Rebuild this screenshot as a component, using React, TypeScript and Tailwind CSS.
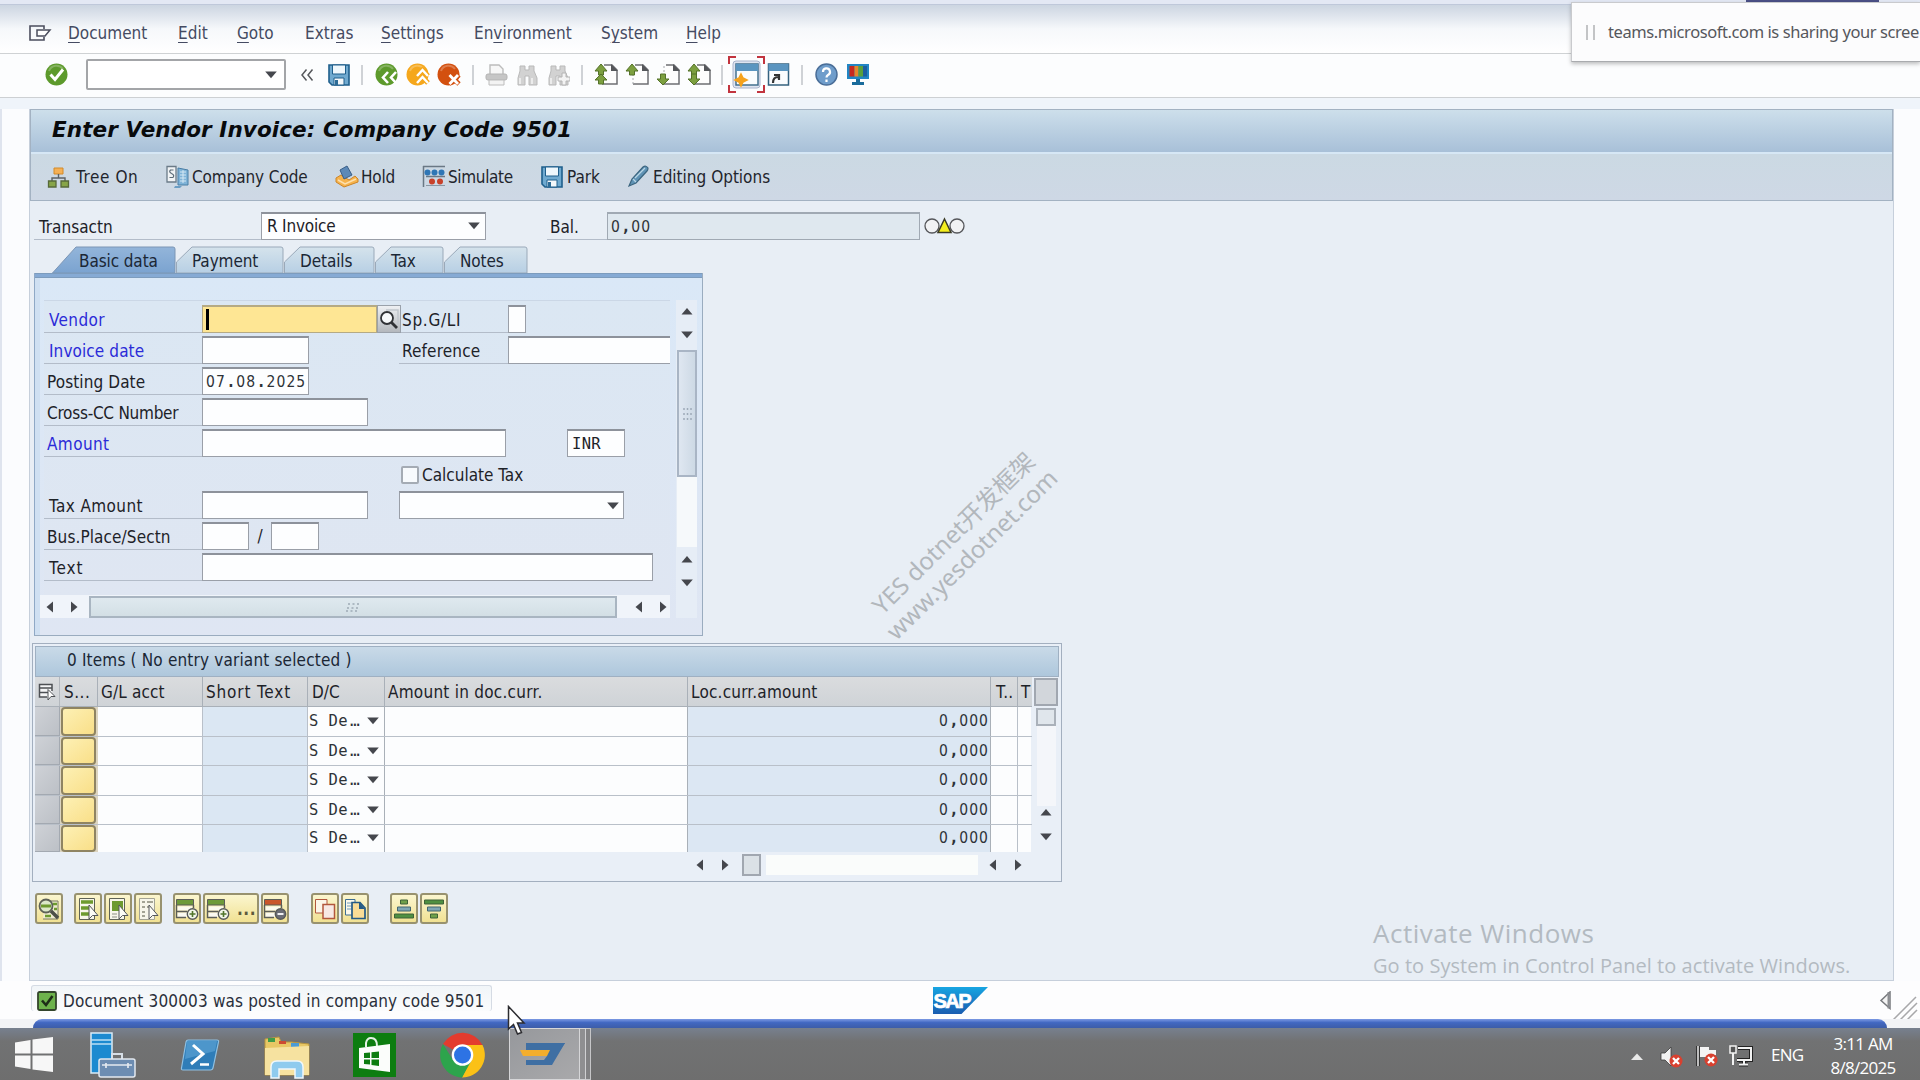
import type { ReactNode } from 'react';

const menuItems = [
  { before: '', key: 'D', after: 'ocument', width: 'w-[110px]' },
  { before: '', key: 'E', after: 'dit', width: 'w-[59px]' },
  { before: '', key: 'G', after: 'oto', width: 'w-[68px]' },
  { before: 'Extr', key: 'a', after: 's', width: 'w-[76px]' },
  { before: '', key: 'S', after: 'ettings', width: 'w-[93px]' },
  { before: 'En', key: 'v', after: 'ironment', width: 'w-[127px]' },
  { before: 'S', key: 'y', after: 'stem', width: 'w-[85px]' },
  { before: '', key: 'H', after: 'elp', width: 'w-[60px]' },
];

const rows = [1, 2, 3, 4, 5];

/* ---------- small building blocks ---------- */

function Svg({ w, h, className = '', children }: { w: number; h: number; className?: string; children: ReactNode }) {
  return (
    <svg width={w} height={h} viewBox={`0 0 ${w} ${h}`} fill="none" className={`block shrink-0 ${className}`}>
      {children}
    </svg>
  );
}

function Arrow({ dir, className = '' }: { dir: 'up' | 'down' | 'left' | 'right'; className?: string }) {
  const d = {
    up: 'M0.5 9.5 L6 3 L11.5 9.5Z',
    down: 'M0.2 2.5 L6 9.3 L11.8 2.5Z',
    left: 'M9 0.5 L2.5 6 L9 11.5Z',
    right: 'M3 0.5 L9.5 6 L3 11.5Z',
  }[dir];
  return (
    <Svg w={12} h={12} className={className}>
      <path d={d} fill="#45474d" />
    </Svg>
  );
}

// Amounts and dates: evenly spaced digits, separators take a whole cell
function Num({ value }: { value: string }) {
  return (
    <span className="text-[15.5px] tracking-[1.05px] text-[#2e3338]">
      {value.split(/([.,])/).map((part, i) =>
        part === '.' || part === ',' ? (
          <span key={i} className="ml-[2.4px] mr-[1.7px] font-bold">{part}</span>
        ) : (
          part
        )
      )}
    </span>
  );
}

function Label({ text, className = '' }: { text: string; className?: string }) {
  return (
    <div className={`flex h-[28px] shrink-0 items-center whitespace-nowrap border-b border-[#b3bcc9] pt-[2px] ${className}`}>
      {text}
    </div>
  );
}

function Field({ className = '', children }: { className?: string; children?: ReactNode }) {
  return (
    <div className={`flex h-[28px] shrink-0 items-center border border-t-2 border-[#9a9fa8] border-t-[#8d929b] bg-[#fdfeff] ${className}`}>
      {children}
    </div>
  );
}

function Separator({ className = '' }: { className?: string }) {
  return <div className={`h-[20px] w-[2px] shrink-0 bg-[#cfd2d6] ${className}`} />;
}

/* ---------- icons ---------- */

function SaveIcon() {
  return (
    <Svg w={22} h={22}>
      <path d="M1 1H21V21H4L1 18Z" fill="#6fa9cf" stroke="#1f5f8c" strokeWidth="1.6" />
      <path d="M4.5 1H17.5V10H4.5Z" fill="#eef7fc" stroke="#1f5f8c" />
      <path d="M6 14H16V21H6Z" fill="#f4f8fa" stroke="#1f5f8c" />
      <path d="M7 16H10V21H7Z" fill="#2d6c97" />
    </Svg>
  );
}

function PageIcon({ up, down, double }: { up?: boolean; down?: boolean; double?: boolean }) {
  return (
    <Svg w={24} h={23}>
      <path d="M10 2H18L23 7V21H8" fill="#fdfdfd" stroke="#6d6f73" strokeWidth="1.5" />
      <path d="M8 3V21" stroke="#a6a8ab" strokeDasharray="2 2" />
      <path d="M17 1V8H24Z" fill="#55575b" />
      {up && <path d="M7 1L13 8H9.5V12H4.5V8H1Z" fill="#7c9f3f" stroke="#55722a" />}
      {double && <path d="M7 11L13 17H9.5V21H4.5V17H1Z" fill="#7c9f3f" stroke="#55722a" />}
      {down && <path d="M7 22L13 16H9.5V11H4.5V16H1Z" fill="#7c9f3f" stroke="#55722a" />}
    </Svg>
  );
}

function Binoculars({ plus }: { plus?: boolean }) {
  return (
    <Svg w={22} h={22}>
      <path d="M3 2H8V6H12V2H17V7L20 14V21H12V12H8V21H1V14L3 7Z" fill="#d2d2d2" stroke="#b9b9b9" />
      <path d="M3 14V20M15 14V20" stroke="#ececec" strokeWidth="2" />
      {plus && <path d="M14 9H18V13H22V17H18V21H14V17H10V13H14Z" fill="#f3f3f3" stroke="#b4b4b4" />}
    </Svg>
  );
}

function BadgeIcon({ fill, children }: { fill: string; children: ReactNode }) {
  return (
    <Svg w={24} h={24}>
      <circle cx="11.5" cy="11.5" r="11" fill={fill} />
      <path d="M4 8a8 8 0 0 1 14-2" stroke="#ffffff" strokeOpacity="0.25" strokeWidth="2" />
      {children}
    </Svg>
  );
}

function ToolButton({ className = 'w-[28px]', children }: { className?: string; children: ReactNode }) {
  return (
    <div
      className={`flex h-[31px] shrink-0 items-center justify-center rounded-[3px] border-2 border-[#98926f] bg-gradient-to-b from-[#fbf6cf] to-[#f1e192] ${className}`}
    >
      {children}
    </div>
  );
}

function ListIcon({ green, pointer }: { green: 'rows' | 'block' | 'none'; pointer?: boolean }) {
  return (
    <Svg w={22} h={24}>
      <path d="M2.5 1.5H17.5V22.5H2.5Z" fill="#f7f6ea" stroke={green === 'none' ? '#a4a495' : '#5e6257'} />
      {green === 'rows' && <path d="M4 5H16M4 11H13M4 17H12" stroke="#6d9a2f" strokeWidth="3.5" />}
      {green === 'block' && <path d="M5 4H16V14H5Z" fill="#6d9a2f" />}
      {green === 'block' && <path d="M5 17H10M5 20H10" stroke="#8d8f85" />}
      {green === 'none' && <path d="M5 5H8M10 5H16M5 10H8M10 10H13M5 15H8M5 19H8" stroke="#a4a495" strokeWidth="2" />}
      {pointer && <path d="M12 8V22L15.5 18.5H21Z" fill="#fbfbf5" stroke="#55575a" />}
    </Svg>
  );
}

function RowIcon({ red }: { red?: boolean }) {
  return (
    <Svg w={24} h={24}>
      <path d="M1.5 2.5H18.5V8H1.5Z" fill={red ? '#c9562c' : '#6d9a3a'} stroke="#5b5d58" />
      <path d="M2.5 9.5H17V13.5H2.5ZM2.5 15.5H12V20H2.5Z" fill="#fbfaf0" />
      <path d="M1.5 8V20.5H11M1.5 14.5H12M18.5 8V11" stroke="#5b5d58" strokeWidth="1.4" />
      <circle cx="17.5" cy="17" r="5.2" fill={red ? '#6a6c75' : '#f4f7ea'} stroke="#575a58" strokeWidth="1.4" />
      {red ? (
        <path d="M14.5 17H20.5" stroke="#fff" strokeWidth="1.8" />
      ) : (
        <path d="M14.5 17H20.5M17.5 14V20" stroke="#52742b" strokeWidth="1.6" />
      )}
    </Svg>
  );
}

/* ---------- top part of the window ---------- */

function MenuBar() {
  return (
    <div className="flex h-[49px] shrink-0 items-center border-b border-[#cfd2d4] bg-gradient-to-b from-[#ccd5e1] via-[#f6f8fb] via-50% to-white pl-[28px] pt-[8px] text-[#454b62]">
      <Svg w={24} h={17} className="mr-[16px]">
        <path d="M16 4V1H2V15H16V12" stroke="#4b4e5e" strokeWidth="1.6" />
        <path d="M9 11V5H22L17 11H9Z" fill="#fff" stroke="#4b4e5e" strokeWidth="1.5" />
      </Svg>
      {menuItems.map((item) => (
        <div key={item.key} className={`shrink-0 ${item.width}`}>
          {item.before}
          <span className="underline decoration-1 underline-offset-[3px]">{item.key}</span>
          {item.after}
        </div>
      ))}
    </div>
  );
}

function StandardToolbar() {
  return (
    <div className="flex h-[44px] shrink-0 items-center border-b border-[#cdd0d3] bg-[#fcfdfe] pb-[2px] pl-[45px]">
      <BadgeIcon fill="#5d9a2c">
        <path d="M5.5 11.5L10 16.5L18 6.5" stroke="#fff" strokeWidth="3" />
      </BadgeIcon>
      <div className="ml-[17px] flex h-[31px] w-[200px] items-center justify-end rounded-[2px] border-2 border-[#a3a5a8] bg-white pr-[7px]">
        <Arrow dir="down" />
      </div>
      <Svg w={14} h={14} className="ml-[14px] mr-[14px]">
        <path d="M6.5 1.5L2 7L6.5 12.5M12.5 1.5L8 7L12.5 12.5" stroke="#55575b" strokeWidth="1.5" />
      </Svg>
      <SaveIcon />
      <Separator className="ml-[11px] mr-[12px]" />
      <BadgeIcon fill="#5d9a2c">
        <path d="M13 9L8 14.5L13 20M21 9L16 14.5L21 20" stroke="#fff" strokeWidth="2.6" />
      </BadgeIcon>
      <div className="ml-[7px]">
        <BadgeIcon fill="#f5a71c">
          <path d="M11 13L16.5 7L22 13M11 20L16.5 14L22 20" stroke="#f5a71c" strokeWidth="5" />
          <path d="M11 13L16.5 7L22 13M11 20L16.5 14L22 20" stroke="#fff" strokeWidth="2.4" />
        </BadgeIcon>
      </div>
      <div className="ml-[7px]">
        <BadgeIcon fill="#d3500f">
          <path d="M12 12L22 21M22 12L12 21" stroke="#d3500f" strokeWidth="5" />
          <path d="M12.500 12L21 21M21 12L12.500 21" stroke="#fff" strokeWidth="2.8" />
        </BadgeIcon>
      </div>
      <Separator className="ml-[11px] mr-[11px]" />
      <Svg w={23} h={23}>
        <path d="M5 11V2H14L18 6V11" fill="#f7f7f7" stroke="#bcbcbc" strokeWidth="1.4" />
        <rect x="1" y="11" width="21" height="6" rx="2" fill="#c6c6c6" stroke="#b4b4b4" />
        <path d="M4 17H19V22H4Z" fill="#f3f3f3" stroke="#bcbcbc" />
      </Svg>
      <div className="ml-[9px]"><Binoculars /></div>
      <div className="ml-[9px]"><Binoculars plus /></div>
      <Separator className="ml-[11px] mr-[11px]" />
      <PageIcon up double />
      <div className="ml-[7px]"><PageIcon up /></div>
      <div className="ml-[7px]"><PageIcon down /></div>
      <div className="ml-[7px]"><PageIcon up down /></div>
      <Separator className="ml-[10px] mr-[5px]" />
      <Svg w={37} h={37}>
        <path d="M1 8V1H8M29 1H36V8M36 29V36H29M8 36H1V29" stroke="#c2343e" strokeWidth="2" />
        <rect x="5" y="5" width="27" height="27" rx="3" fill="#dfe4f0" stroke="#aab4cc" />
        <path d="M8 8H30V29H8Z" fill="#fafcfe" stroke="#44708f" strokeWidth="1.5" />
        <path d="M8 8H30V15H8Z" fill="#5b95c0" />
        <path d="M13 18L15 22L19 24L15 26L13 30L11 26L7 24L11 22Z" fill="#f6a21d" stroke="#f6a21d" strokeWidth="1.6" />
      </Svg>
      <Svg w={23} h={23} className="ml-[2px]">
        <path d="M1.500 1H21.500V22H1.500Z" fill="#fafcfe" stroke="#34627f" strokeWidth="1.5" />
        <path d="M1.500 1H21.500V8H1.500Z" fill="#5b95c0" />
        <path d="M6 20C6 16 8 14 11 14M7 12H12V17" stroke="#333" strokeWidth="2.2" />
      </Svg>
      <Separator className="ml-[11px] mr-[12px]" />
      <Svg w={23} h={23}>
        <circle cx="11.500" cy="11.500" r="10.500" fill="#6f9dcb" stroke="#4a6e98" strokeWidth="1.5" />
        <path d="M8 9a3.500 3.500 0 1 1 5 3q-1.500 1-1.500 2.500M11.500 16.500V19" stroke="#fff" strokeWidth="2.2" />
      </Svg>
      <Svg w={24} h={23} className="ml-[8px]">
        <path d="M1 1H23V16H1Z" fill="#2186c4" />
        <path d="M3.500 3H8.500V13.500H3.500Z" fill="#c8281e" />
        <path d="M8.500 3H12.500V13.500H8.500Z" fill="#e8872a" />
        <path d="M12.500 3H17V13.500H12.500Z" fill="#58a03c" />
        <path d="M17 3H21V13.500H17Z" fill="#1d5fa0" />
        <path d="M10 16H14V19H18V22H6V19H10Z" fill="#1a6c9c" />
      </Svg>
    </div>
  );
}

function TitlePanel() {
  return (
    <div className="h-[92px] border border-[#a3b2c2]">
      <div className="flex h-[44px] items-center border-b-2 border-[#d6e7f5] bg-gradient-to-b from-[#cddfeb] to-[#a8c0d8] pb-[3px] pl-[21px]">
        <h1 className="whitespace-nowrap font-['DejaVu_Sans',sans-serif] text-[21.5px] font-bold italic tracking-[0.09px] text-[#080a0c]">
          Enter Vendor Invoice: Company Code 9501
        </h1>
      </div>
      <div className="flex h-[46px] items-center bg-gradient-to-b from-[#cbd9e3] to-[#ced8e5] pb-px pl-[16px] text-[#1f252c]">
        <div className="flex w-[119px] shrink-0 items-center whitespace-nowrap tracking-[0.6px]">
          <Svg w={23} h={22} className="mr-[6px]">
            <path d="M7 2H16V8H7Z" fill="#f5b055" stroke="#d28a2a" />
            <path d="M11.500 8V12M5 15V12H18V15" stroke="#5d6266" strokeWidth="1.4" />
            <path d="M1.500 15H9V21H1.500ZM14 15H21.500V21H14Z" fill="#87a548" stroke="#57693a" strokeWidth="1.3" />
          </Svg>
          Tree On
        </div>
        <div className="flex w-[169px] shrink-0 items-center whitespace-nowrap tracking-[-0.1px]">
          <Svg w={24} h={24} className="mr-[2px]">
            <path d="M1 1.500H10V17H1Z" fill="#f0f3f5" stroke="#6b7b88" strokeWidth="1.300" />
            <path d="M7.500 5H4.500Q2.500 7 5.500 8.500Q9 10 7 12.500H3.500" stroke="#5b6a76" strokeWidth="1.200" />
            <path d="M12 3L22 5V20H12Z" fill="#7fb3d8" stroke="#4a7ea5" />
            <path d="M14 7H20M14 10H20M14 13H20M14 16H20M17 5V18" stroke="#d5e8f4" />
            <path d="M9 21H16L14 23H8Z" fill="#6b9dc4" />
          </Svg>
          Company Code
        </div>
        <div className="flex w-[87px] shrink-0 items-center whitespace-nowrap tracking-[-0.2px]">
          <Svg w={24} h={23} className="mr-[2px]">
            <path d="M1 13L6 10L14 15L20 11L23 14V17L9 22L1 17Z" fill="#f6b34c" stroke="#cc8529" />
            <path d="M3 15L10 19L21 14" stroke="#fde0ae" strokeWidth="1.500" />
            <path d="M5 5L12 1L17 10L9 14Z" fill="#5c89b8" stroke="#3a5f88" />
          </Svg>
          Hold
        </div>
        <div className="flex w-[119px] shrink-0 items-center whitespace-nowrap tracking-[-0.35px]">
          <Svg w={24} h={23} className="mr-[2px]">
            <path d="M1 1.500H23M1.500 1V22M4 11.500H23" stroke="#6a7885" strokeWidth="1.500" />
            <circle cx="5.500" cy="7.500" r="3" fill="#2f76b5" />
            <circle cx="12.500" cy="7.500" r="3" fill="#2f76b5" />
            <circle cx="19.500" cy="7.500" r="3" fill="#2f76b5" />
            <circle cx="10" cy="16.500" r="3" fill="#c8412a" />
            <circle cx="18" cy="16.500" r="3" fill="#c8412a" />
            <path d="M4 20.500H23" stroke="#8a97a3" />
          </Svg>
          Simulate
        </div>
        <div className="flex w-[87px] shrink-0 items-center whitespace-nowrap">
          <div className="mr-[4px]"><SaveIcon /></div>
          Park
        </div>
        <div className="flex shrink-0 items-center whitespace-nowrap">
          <Svg w={24} h={23} className="mr-[1px]">
            <path d="M1 21L4 14L15 2Q18 0 20 3Q20 5 19 6L8 18Z" fill="#5f93b5" stroke="#3b657f" strokeWidth="1.200" />
            <path d="M5 14L8 17M7 13L17 3" stroke="#b9d6e6" strokeWidth="1.300" />
          </Svg>
          Editing Options
        </div>
      </div>
    </div>
  );
}

/* ---------- header data ---------- */

function TransactionRow() {
  return (
    <div className="mt-[11px] flex h-[29px] items-start pl-[4px]">
      <Label text="Transactn" className="w-[227px] pl-[5px] text-[#1d2228]" />
      <Field className="w-[225px] justify-between pb-px pl-[5px] pr-[5px] tracking-[-0.2px] text-[#1d2228]">
        <span>R Invoice</span>
        <Arrow dir="down" />
      </Field>
      <Label text="Bal." className="ml-[61px] w-[60px] pl-[3px] text-[#1d2228]" />
      <div className="flex h-[28px] w-[313px] shrink-0 items-center border border-t-2 border-[#a0a9b3] bg-[#dfe8ef] pl-[3px]">
        <Num value="0,00" />
      </div>
      <Svg w={42} h={18} className="ml-[4px] mt-[5px]">
        <circle cx="8" cy="9" r="7" fill="#f1f2f4" stroke="#55565a" strokeWidth="1.300" />
        <circle cx="33" cy="9" r="7" fill="#f1f2f4" stroke="#55565a" strokeWidth="1.300" />
        <path d="M20.500 2L27 15.500H14Z" fill="#f4ee1e" stroke="#3a3a24" strokeWidth="1.500" />
      </Svg>
    </div>
  );
}

function Tab({ text, width, active }: { text: string; width: number; active?: boolean }) {
  const slope = active ? 24 : 16;
  const gradientId = active ? 'tab-active' : 'tab-plain';
  return (
    <div className="relative flex h-[27px] shrink-0 items-center pt-[2px]" style={{ width }}>
      <svg width={width} height={27} className="absolute left-0 top-0 block">
        <defs>
          <linearGradient id={gradientId} x1="0" y1="0" x2="0" y2="1">
            <stop offset="0" stopColor={active ? '#93b5da' : '#d5e3ec'} />
            <stop offset="1" stopColor={active ? '#7ba3d0' : '#b7cfe4'} />
          </linearGradient>
        </defs>
        <path
          d={`M0.500 ${active ? 27 : 16} L${slope} 1 H${width - 3} Q${width - 1} 1 ${width - 1} 3 V27 H0.500Z`}
          fill={`url(#${gradientId})`}
          stroke={active ? '#7c96b5' : '#9aa9b9'}
        />
      </svg>
      <span className={`relative whitespace-nowrap tracking-[-0.1px] text-[#1b2735] ${active ? 'pl-[27px]' : 'pl-[16px]'}`}>{text}</span>
    </div>
  );
}

function BasicData() {
  return (
    <div className="h-[295px] w-[626px] overflow-hidden border-t border-[#cbd7e6] bg-gradient-to-b from-[#dbe7f3] to-[#dfe6f2] pt-[4px] text-[#1d2228]">
      <div className="flex flex-col gap-[3px]">
        <div className="flex">
          <Label text="Vendor" className="w-[158px] pl-[5px] tracking-[0.4px] text-[#2b2bd8]" />
          <div className="flex h-[28px] w-[175px] shrink-0 items-center border border-t-2 border-[#b5aa84] bg-[#fee694] pl-[3px]">
            <div className="h-[21px] w-[3px] bg-black" />
          </div>
          <div className="flex h-[28px] w-[24px] shrink-0 items-center justify-center border border-[#9aa1aa] bg-gradient-to-b from-[#eef0f3] to-[#b4b8bd]">
            <Svg w={22} h={22}>
              <path d="M8 2H20V17" stroke="#c1c6cd" strokeWidth="1.500" />
              <circle cx="9" cy="10" r="6" fill="#f6f8fa" stroke="#303236" strokeWidth="1.800" />
              <path d="M13.500 14.500L19 20" stroke="#303236" strokeWidth="2.800" />
            </Svg>
          </div>
          <Label text="Sp.G/LI" className="w-[107px] pl-px tracking-[0.7px]" />
          <Field className="w-[18px]" />
        </div>
        <div className="flex">
          <Label text="Invoice date" className="w-[158px] pl-[5px] tracking-[0.1px] text-[#2b2bd8]" />
          <Field className="w-[107px]" />
          <Label text="Reference" className="ml-[90px] w-[109px] pl-[3px] tracking-[0.15px]" />
          <Field className="w-[180px]" />
        </div>
        <div className="flex">
          <Label text="Posting Date" className="w-[158px] pl-[3px] tracking-[0.1px]" />
          <Field className="w-[107px] pl-[3px]"><Num value="07.08.2025" /></Field>
        </div>
        <div className="flex">
          <Label text="Cross-CC Number" className="w-[158px] pl-[3px] tracking-[-0.25px]" />
          <Field className="w-[166px]" />
        </div>
        <div className="flex">
          <Label text="Amount" className="w-[158px] pl-[3px] tracking-[0.4px] text-[#2b2bd8]" />
          <Field className="w-[304px]" />
          <Field className="ml-[61px] w-[58px] pl-[4px] font-['DejaVu_Sans_Mono',monospace] text-[15.5px] tracking-[0.300px]">INR</Field>
        </div>
        <div className="flex h-[28px] items-center pl-[357px] pt-[2px]">
          <div className="mr-[3px] h-[18px] w-[18px] rounded-[2px] border-2 border-[#a4abb4] bg-[#f7fafd]" />
          Calculate Tax
        </div>
        <div className="flex">
          <Label text="Tax Amount" className="w-[158px] pl-[5px] tracking-[0.4px]" />
          <Field className="w-[166px]" />
          <Field className="ml-[31px] w-[225px] justify-end pr-[4px]"><Arrow dir="down" /></Field>
        </div>
        <div className="flex">
          <Label text="Bus.Place/Sectn" className="w-[158px] pl-[3px] tracking-[0.1px]" />
          <Field className="w-[47px]" />
          <div className="flex h-[28px] w-[22px] items-center justify-center">/</div>
          <Field className="w-[48px]" />
        </div>
        <div className="flex">
          <Label text="Text" className="w-[158px] pl-[5px] tracking-[1px]" />
          <Field className="w-[451px]" />
        </div>
      </div>
    </div>
  );
}

function TabPanel() {
  return (
    <div className="h-[363px] w-[669px] border border-t-0 border-[#9aacbf] border-l-[#8fa9c6] bg-[#dde7f4]">
      <div className="h-[5px] border-b border-t border-[#7d9cbd] bg-[#86aad4]" />
      <div className="flex h-[357px] border-l-[5px] border-[#cfe0f2] bg-gradient-to-b from-[#dae8f7] to-[#dfe6f3] pl-[4px] pt-[22px]">
        <div className="w-[626px] shrink-0">
          <BasicData />
          {/* horizontal scrollbar */}
          <div className="-ml-[4px] flex h-[23px] w-[630px] items-center bg-[#f0f4fa]">
            <Arrow dir="left" className="ml-[4px]" />
            <Arrow dir="right" className="ml-[12px]" />
            <div className="ml-[9px] flex h-[22px] w-[528px] items-center justify-center border-2 border-[#a9b5c1] bg-gradient-to-b from-[#dfe9ef] to-[#d3dfe5]">
              <Svg w={14} h={10}>
                <path d="M2 2H13M1 6H12M0 9H11" stroke="#9eabb5" strokeWidth="1.500" strokeDasharray="2 2.500" />
              </Svg>
            </div>
            <Arrow dir="left" className="ml-[16px]" />
            <Arrow dir="right" className="ml-[12px]" />
          </div>
        </div>
        {/* vertical scrollbar */}
        <div className="ml-[6px] flex h-[318px] w-[21px] flex-col items-center bg-[#e6edf6]">
          <Arrow dir="up" className="mt-[5px]" />
          <Arrow dir="down" className="mt-[12px]" />
          <div className="mt-[9px] flex h-[127px] w-[20px] items-center justify-center border-2 border-[#a9b5c5] bg-gradient-to-r from-[#dfe7f1] to-[#cdd9e5]">
            <Svg w={10} h={14}>
              <path d="M2 1V14M5.500 1V14M9 1V14" stroke="#9eabb9" strokeWidth="1.500" strokeDasharray="2 3" />
            </Svg>
          </div>
          <div className="h-[70px] w-[20px] bg-[#f6f9fb]" />
          <Arrow dir="up" className="mt-[6px]" />
          <Arrow dir="down" className="mt-[12px]" />
        </div>
      </div>
    </div>
  );
}

/* ---------- item table ---------- */

function ItemTable() {
  return (
    <div className="h-[239px] w-[1030px] border border-[#a3afbf] bg-[#e9eff7] p-[2px]">
      <div className="flex h-[31px] items-center border border-[#9fb0c2] bg-gradient-to-b from-[#c9dae8] to-[#aec7dc] pb-[3px] pl-[31px] tracking-[0.17px] text-[#1b2735]">
        <span className="whitespace-pre">0 Items ( No entry variant selected )</span>
      </div>
      <div className="flex">
        <div className="w-[997px] shrink-0">
          <div className="flex h-[30px] items-center border-b border-[#a9b0b8] bg-gradient-to-b from-[#dadcde] to-[#cfd3d7] text-[#1d2228]">
            <div className="flex h-full w-[25px] shrink-0 items-center justify-center border-r border-[#b3b8be]">
              <Svg w={18} h={18}>
                <path d="M1.500 1.500H14V14H1.500Z" fill="#f4f5f6" />
                <path d="M14 8V1.500H1.500V14H9M1.500 5H14M1.500 9.500H10" stroke="#4d5054" strokeWidth="1.500" />
                <path d="M10 6.500V17L13 13.500H17Z" fill="#fff" stroke="#4d5054" />
              </Svg>
            </div>
            <div className="flex h-full w-[38px] shrink-0 items-center overflow-hidden border-r border-[#a9b0b8] pl-[4px] tracking-[0.500px]">S...</div>
            <div className="flex h-full w-[105px] shrink-0 items-center border-r border-[#a9b0b8] pl-[3px] tracking-[0.15px]">G/L acct</div>
            <div className="flex h-full w-[105px] shrink-0 items-center border-r border-[#a9b0b8] pl-[3px] tracking-[0.85px]">Short Text</div>
            <div className="flex h-full w-[77px] shrink-0 items-center border-r border-[#a9b0b8] pl-[4px]">D/C</div>
            <div className="flex h-full w-[303px] shrink-0 items-center border-r border-[#a9b0b8] pl-[3px] tracking-[0.25px]">Amount in doc.curr.</div>
            <div className="flex h-full w-[303px] shrink-0 items-center border-r border-[#a9b0b8] pl-[3px] tracking-[0.2px]">Loc.curr.amount</div>
            <div className="flex h-full w-[27px] shrink-0 items-center overflow-hidden border-r border-[#a9b0b8] pl-[5px]">T..</div>
            <div className="flex h-full w-[14px] shrink-0 items-center pl-[3px]">T</div>
          </div>
          {rows.map((row) => (
            <div key={row} className={`flex border-[#b9c0c9] ${row === rows.length ? 'h-[26.6px]' : 'h-[29.5px] border-b'}`}>
              <div className="w-[25px] shrink-0 border-b border-r border-[#a3a9b1] bg-gradient-to-br from-[#cfd2d7] to-[#bcc0c6]" />
              <div className="w-[38px] shrink-0 bg-[#ddd5c0] pl-px pr-[2px]">
                <div className="h-full rounded-[4px] border-2 border-[#8f8462] bg-gradient-to-br from-[#fdf0b4] to-[#f9df88]" />
              </div>
              <div className="w-[105px] shrink-0 border-r border-[#b9c0c9] bg-[#fcfdfe]" />
              <div className="w-[105px] shrink-0 border-r border-[#b9c0c9] bg-[#dbe7f3]" />
              <div className="flex w-[77px] shrink-0 items-center border-r border-[#a9b0b8] bg-[#fcfdfe] pl-px font-['DejaVu_Sans_Mono',monospace] text-[15.5px] text-[#2e3338]">
                <span className="whitespace-pre tracking-[0.400px]">S De</span>
                <span className="-ml-px w-[11px] tracking-[-6px]">...</span>
                <Arrow dir="down" className="ml-[9px]" />
              </div>
              <div className="w-[303px] shrink-0 border-r border-[#a9b0b8] bg-[#fcfdfe]" />
              <div className="flex w-[303px] shrink-0 items-center justify-end border-r border-[#a9b0b8] bg-[#dce7f3] pr-[1px]">
                <Num value="0,000" />
              </div>
              <div className="w-[27px] shrink-0 border-r border-[#b9c0c9] bg-[#fcfdfe]" />
              <div className="w-[13px] shrink-0 bg-[#fcfdfe]" />
            </div>
          ))}
          <div className="flex h-[27px] items-center pl-[659px]">
            <Arrow dir="left" />
            <Arrow dir="right" className="ml-[13px]" />
            <div className="ml-[11px] h-[22px] w-[19px] shrink-0 border-2 border-[#a1a7b0] bg-[#dbe1e6]" />
            <div className="ml-[5px] h-[20px] w-[212px] shrink-0 bg-[#fafcfb]" />
            <Arrow dir="left" className="ml-[9px]" />
            <Arrow dir="right" className="ml-[13px]" />
          </div>
        </div>
        <div className="ml-[2px] flex w-[24px] flex-col items-center">
          <div className="mt-px h-[28px] w-[24px] border-2 border-[#a1a7b0] bg-[#d2d6db]" />
          <div className="mt-[2px] h-[18px] w-[20px] border-2 border-[#aab1ba] bg-[#e0e6ec]" />
          <div className="h-[80px] w-[19px] bg-[#f4f6fa]" />
          <Arrow dir="up" />
          <Arrow dir="down" className="mt-[13px]" />
        </div>
      </div>
    </div>
  );
}

function ItemToolbar() {
  return (
    <div className="mt-[11px] flex h-[31px] pl-[5px]">
      <ToolButton>
        <Svg w={24} h={24}>
          <path d="M8 4H21V22H6" fill="#efecd0" stroke="#77795f" />
          <path d="M16 7H20M17 12H20M8 19H14" stroke="#6d9a2f" strokeWidth="2.500" />
          <circle cx="9" cy="9" r="6.500" fill="#dbe8c9" stroke="#5e6257" strokeWidth="1.800" />
          <path d="M4 9H14" stroke="#6d9a2f" strokeWidth="3" />
          <path d="M14 14L21 21" stroke="#4c4f48" strokeWidth="3.500" />
        </Svg>
      </ToolButton>
      <div className="ml-[11px] flex gap-[2px]">
        <ToolButton><ListIcon green="rows" pointer /></ToolButton>
        <ToolButton><ListIcon green="block" pointer /></ToolButton>
        <ToolButton><ListIcon green="none" pointer /></ToolButton>
      </div>
      <div className="ml-[11px] flex gap-[2px]">
        <ToolButton><RowIcon /></ToolButton>
        <ToolButton className="w-[56px]">
          <RowIcon />
          <span className="ml-[7px] font-bold tracking-[0.500px] text-[#5d5a3c]">...</span>
        </ToolButton>
        <ToolButton><RowIcon red /></ToolButton>
      </div>
      <div className="ml-[22px] flex gap-[2px]">
        <ToolButton>
          <Svg w={24} h={24}>
            <path d="M2.500 2.500H14V16H2.500Z" fill="#fbf6e8" stroke="#b2573c" />
            <path d="M10 7.500H21.500V21.500H10Z" fill="#f7e9e4" stroke="#b2573c" strokeWidth="1.500" />
          </Svg>
        </ToolButton>
        <ToolButton>
          <Svg w={24} h={24}>
            <path d="M2.500 2.500H12V18H2.500Z" fill="#fbf9ec" stroke="#3c6d92" />
            <path d="M4 6H8M4 9H8M4 12H8" stroke="#6f9cbc" />
            <path d="M9 5.500H17L22 11V21.500H9Z" fill="#fadc96" stroke="#245a86" strokeWidth="1.700" />
            <path d="M16 5V12H22Z" fill="#245a86" />
          </Svg>
        </ToolButton>
      </div>
      <div className="ml-[21px] flex gap-[2px]">
        <ToolButton>
          <Svg w={22} h={24}>
            <path d="M7.500 3H14.500V7H7.500Z" fill="#6fa04a" stroke="#3e6238" />
            <path d="M4.500 10H17.500V14H4.500Z" fill="#7ea6b4" stroke="#426673" />
            <path d="M1.500 17H20.500V21H1.500Z" fill="#4f9041" stroke="#3e6238" />
          </Svg>
        </ToolButton>
        <ToolButton>
          <Svg w={22} h={24}>
            <path d="M1.500 3H20.500V7H1.500Z" fill="#4f9041" stroke="#3e6238" />
            <path d="M4.500 10H17.500V14H4.500Z" fill="#7ea6b4" stroke="#426673" />
            <path d="M7.500 17H14.500V21H7.500Z" fill="#6fa04a" stroke="#3e6238" />
          </Svg>
        </ToolButton>
      </div>
    </div>
  );
}

/* ---------- bottom of the screen ---------- */

function StatusBar() {
  return (
    <div className="flex h-[38px] items-start bg-[#fdfdfe] pt-[4px]">
      <div className="ml-[31px] flex h-[26px] w-[461px] shrink-0 items-center rounded-[3px] border border-b-0 border-[#d5dbe4] bg-gradient-to-b from-[#f1f5f8] to-[#fbfcfd] pl-[5px] pt-[4px] tracking-[0.16px] text-[#2a2f3a]">
        <Svg w={20} h={20} className="mr-[6px]">
          <rect x="1" y="1" width="18" height="18" rx="1.500" fill="#6db24c" stroke="#33452c" strokeWidth="1.800" />
          <path d="M5 9.500L9 14L15.500 5" stroke="#1d2d18" strokeWidth="2.600" />
        </Svg>
        <span className="whitespace-nowrap">Document 300003 was posted in company code 9501</span>
      </div>
      <Svg w={56} h={28} className="ml-[441px] mt-[2px]">
        <defs>
          <linearGradient id="sap" x1="0" y1="0" x2="0" y2="1">
            <stop offset="0" stopColor="#17a5e2" />
            <stop offset="1" stopColor="#1a5cb0" />
          </linearGradient>
        </defs>
        <path d="M0 0H55L28.500 27H0Z" fill="url(#sap)" />
        <text x="0.500" y="20.500" fill="#fff" stroke="#fff" strokeWidth="0.700" fontFamily="Liberation Sans, sans-serif" fontSize="20" fontWeight="700" textLength="38">SAP</text>
      </Svg>
      <Svg w={13} h={19} className="ml-[890px] mt-[6px]">
        <path d="M11 1V17.500L2 9.500Z" fill="#f4f4f4" stroke="#77797d" strokeWidth="1.500" />
        <path d="M9.500 1V17.500" stroke="#8b8d91" strokeWidth="2" />
      </Svg>
      <Svg w={27} h={26} className="mt-[10px]">
        <path d="M1 25L24 2M8 25L25 8M15 25L25 15" stroke="#a8a8aa" strokeWidth="1.500" />
      </Svg>
    </div>
  );
}

function Taskbar() {
  return (
    <div className="flex h-[52px] bg-gradient-to-b from-[#77808f] via-[#717273] via-25% to-[#6e6e6e] text-white">
      <Svg w={40} h={36} className="ml-[15px] mt-[9px]">
        <path d="M0 5.500L15.500 3V16.500H0ZM17.500 2.500L38 0V16.500H17.500ZM0 18.500H15.500V32L0 29.500ZM17.500 18.500H38V35L17.500 32.500Z" fill="#f7f7f7" />
      </Svg>
      <Svg w={48} h={47} className="ml-[34px] mt-[4px]">
        <path d="M2 1H23V41H2Z" fill="#1c8ad0" stroke="#d9ecf7" strokeWidth="1.500" />
        <path d="M2 8H23M2 12H23" stroke="#b9def3" strokeWidth="1.500" />
        <path d="M23 27V22H33V27" stroke="#d7dee6" strokeWidth="2" />
        <rect x="10" y="27" width="36" height="18" rx="2" fill="#6d8db2" stroke="#e3e9f0" strokeWidth="1.500" />
        <path d="M13 33H43M17 31V36M39 31V36" stroke="#e3e9f0" strokeWidth="1.700" />
      </Svg>
      <Svg w={40} h={33} className="ml-[43px] mt-[11px]">
        <path d="M8 1H37Q39 1 38.500 3L33 29Q32.500 31 30.500 31H3Q1 31 1.500 29L6 3Q6.500 1 8 1Z" fill="#2f7db8" stroke="#8fc0e2" strokeWidth="1.200" />
        <path d="M7 2H37L35 12L5 20Z" fill="#6bb0de" fillOpacity="0.500" />
        <path d="M13 6L23 15L11 25" stroke="#fff" strokeWidth="3" />
        <path d="M20 25.500H29" stroke="#fff" strokeWidth="2.500" />
      </Svg>
      <Svg w={48} h={44} className="ml-[43px] mt-[7px]">
        <path d="M2 4L16 2L18 7H28L46 9V40H2Z" fill="#e8c765" stroke="#b8953f" />
        <path d="M5 3H12V7H5Z" fill="#3f9b48" />
        <path d="M16 6H23V9H16Z" fill="#cc4a32" />
        <path d="M28 8H36V12H28Z" fill="#4b9cd6" />
        <path d="M2 13L46 11V40H2Z" fill="#f6e2a0" />
        <path d="M8 43V32Q8 26 14 26H34Q40 26 40 32V43H32V34H16V43Z" fill="#8fcbee" stroke="#f0f8fc" strokeWidth="1.500" />
      </Svg>
      <Svg w={43} h={45} className="ml-[42px] mt-[5px]">
        <path d="M0 0H43V44H0Z" fill="#0d7d10" />
        <path d="M6 15L37 11V39L6 35Z" fill="#fbfdfb" />
        <path d="M13 14V10Q14 5 18 5Q24 5 24 13" stroke="#e5f3e5" strokeWidth="2" />
        <path d="M11 20L17 19.500V25H11ZM18.500 19.300L26 18.500V25H18.500ZM11 26.500H17V31.500L11 31ZM18.500 26.500H26V33L18.500 32Z" fill="#0d7d10" />
      </Svg>
      <Svg w={48} h={46} className="ml-[43px] mt-[4px]">
        <path d="M23.500 23L4 12A22.500 22.500 0 0 1 43.500 13H23.500Z" fill="#e33b2e" />
        <path d="M23.500 23H34L23 45.500A22.500 22.500 0 0 0 43.500 13H23.500Z" fill="#fbc116" />
        <path d="M4 12A22.500 22.500 0 0 0 23 45.500L32.500 28.500L14 28Z" fill="#2da44c" />
        <circle cx="23.500" cy="23" r="10.800" fill="#fff" />
        <circle cx="23.500" cy="23" r="8.500" fill="#2d73e4" />
      </Svg>
      {/* active task with stacked windows */}
      <div className="ml-[22px] flex h-full w-[71px] items-center justify-center border border-[#d6d6d8] bg-gradient-to-br from-[#96989c] to-[#a9a9ab] pr-[4px]">
        <Svg w={46} h={26}>
          <path d="M6 2H45L32 24H6V19H24L27 15H6V7H6Z" fill="#3f6fa3" />
          <path d="M6 2H45L40 9H6Z" fill="#3f6fa3" />
          <path d="M0 9H30L27 15H3Z" fill="#f4ae2d" />
        </Svg>
      </div>
      <div className="w-[6px] border border-l-0 border-[#d0d0d2] bg-[#8f8f91]" />
      <div className="w-[5px] border border-l-0 border-[#c6c6c8] bg-[#828284]" />

      <Svg w={14} h={9} className="ml-auto mt-[24px]">
        <path d="M1 8L7 1.500L13 8Z" fill="#e9e9e9" />
      </Svg>
      <Svg w={26} h={24} className="ml-[16px] mt-[18px]">
        <path d="M1 7H5L11 1V20L5 14H1Z" fill="#f2f2f2" stroke="#3d3d3d" strokeWidth="0.800" />
        <circle cx="16" cy="15" r="6.500" fill="#d8402f" />
        <path d="M13 12L19 18M19 12L13 18" stroke="#fff" strokeWidth="2.300" />
      </Svg>
      <Svg w={24} h={24} className="ml-[10px] mt-[17px]">
        <path d="M2 1V21" stroke="#1f1f1f" strokeWidth="3.500" />
        <path d="M2 1V21" stroke="#f4f4f4" strokeWidth="1.500" />
        <path d="M4 2H13V5H20V10L13 12H4Z" fill="#f4f4f4" />
        <circle cx="15" cy="15" r="6.500" fill="#d8402f" />
        <path d="M12 12L18 18M18 12L12 18" stroke="#fff" strokeWidth="2.300" />
      </Svg>
      <Svg w={24} h={22} className="ml-[9px] mt-[17px]">
        <path d="M9 3H22V15H8M15 15V19M10 19.500H19" stroke="#222" strokeWidth="4" />
        <path d="M9 3H22V15H8M15 15V19M10 19.500H19M4 8V20" stroke="#f2f2f2" strokeWidth="2" />
        <path d="M1 1H7V8H1Z" fill="#555" stroke="#f2f2f2" strokeWidth="1.500" />
      </Svg>
      <div className="ml-[18px] flex w-[33px] items-center pt-[2px] font-['Open_Sans','Noto_Sans',sans-serif] text-[17px] tracking-[-0.800px]">ENG</div>
      <div className="ml-[14px] mr-[12px] flex w-[90px] flex-col items-center pt-[4px] font-['Open_Sans','Noto_Sans',sans-serif] text-[17px] leading-[24px] tracking-[-0.700px]">
        <span>3:11 AM</span>
        <span>8/8/2025</span>
      </div>
    </div>
  );
}

/* ---------- things floating over the window ---------- */

function SharingNotice() {
  return (
    <div className="absolute right-0 top-[2px] flex h-[60px] w-[349px] items-center overflow-hidden border border-r-0 border-[#c9cacd] border-b-[#a9abae] bg-[#fcfcfd] pl-[14px] font-['Noto_Sans','Open_Sans',sans-serif] shadow-[0_2px_4px_rgba(0,0,0,0.25)]">
      <div className="h-[15px] w-[9px] shrink-0 border-x-2 border-[#c3c4c6]" />
      <span className="ml-[13px] whitespace-nowrap text-[16.5px] tracking-[-0.42px] text-[#55575c]">
        teams.microsoft.com is sharing your scree
      </span>
    </div>
  );
}

function Watermark() {
  return (
    <div className="absolute left-[822px] top-[516px] w-[280px] -rotate-[44.800deg] font-['Noto_Sans','Noto_Sans_CJK_SC',sans-serif] text-[24px] leading-[28px] text-[#b2b7bc]">
      <div className="whitespace-nowrap pl-[33px]">YES dotnet开发框架</div>
      <div className="whitespace-nowrap pl-[25px]">www.yesdotnet.com</div>
    </div>
  );
}

export default function App() {
  return (
    <div className="relative flex h-[1080px] w-[1920px] flex-col overflow-hidden bg-[#fbfcfe] font-['DejaVu_Sans_Condensed','DejaVu_Sans',sans-serif] text-[17px] leading-[22px]">
      <div className="flex h-[5px] shrink-0 justify-end border-b border-[#bfc8da] bg-[#e3e8f4] pr-[41px]">
        <div className="h-[2px] w-[133px] bg-[#4a4f86]" />
      </div>
      <div className="flex h-[1014px] shrink-0 flex-col">
        <MenuBar />
        <StandardToolbar />
        <div className="h-[11px] shrink-0 bg-[#eff4fa]" />
        <div className="flex h-[872px] shrink-0 border-l-2 border-[#dfe4ee]">
          <div className="ml-[27px] flex w-[1865px] flex-col border-x border-b border-[#c6cfdb] bg-[#e8eef5]">
            <TitlePanel />
            <TransactionRow />
            <div className="mt-[5px] flex pl-[22px]">
              <Tab text="Basic data" width={124} active />
              <Tab text="Payment" width={108} />
              <Tab text="Details" width={91} />
              <Tab text="Tax" width={69} />
              <Tab text="Notes" width={84} />
            </div>
            <div className="pl-[4px]">
              <TabPanel />
            </div>
            <div className="mt-[7px] pl-[2px]">
              <ItemTable />
            </div>
            <ItemToolbar />
          </div>
        </div>
        <StatusBar />
      </div>
      <div className="h-[9px] shrink-0 bg-[#f2f3f6] px-[33px]">
        <div className="h-full rounded-t-[20px] bg-gradient-to-b from-[#7d9ae4] via-[#4268c2] via-40% to-[#3d5da8]" />
      </div>
      <Taskbar />

      <SharingNotice />
      <Watermark />
      <div className="absolute left-[1373px] top-[916px] whitespace-nowrap font-['Open_Sans','Noto_Sans',sans-serif] text-[#b3bac1]">
        <div className="text-[26px] leading-[34px] tracking-[0.5px]">Activate Windows</div>
        <div className="text-[20px] leading-[31px] tracking-[0.05px]">Go to System in Control Panel to activate Windows.</div>
      </div>
      <Svg w={20} h={32} className="absolute left-[507px] top-[1005px]">
        <path d="M1.500 1.500V24L6.500 19.500L10.500 29L14.500 27.500L10.500 18H17Z" fill="#fff" stroke="#2c2c30" strokeWidth="1.500" />
      </Svg>
    </div>
  );
}
